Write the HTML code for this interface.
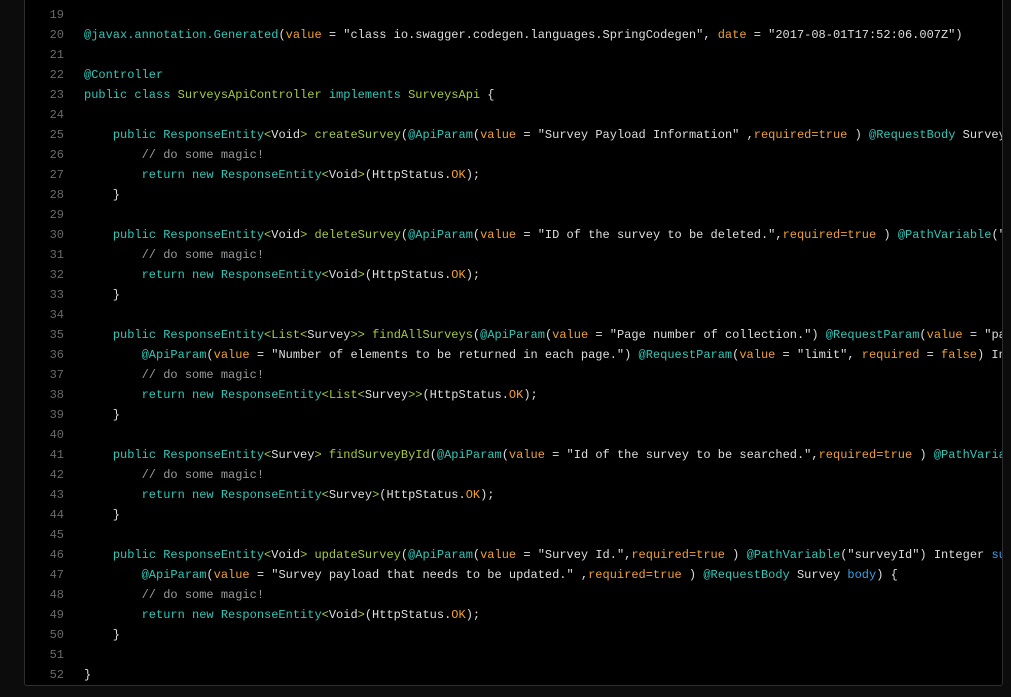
<!DOCTYPE html>
<html><head><meta charset="utf-8"><style>
html,body{margin:0;padding:0;background:#0c0c0c;width:1011px;height:697px;overflow:hidden}
.box{position:absolute;left:24px;top:-2px;width:977px;height:686px;background:#000;border:1px solid #2e2e2e;border-radius:3px;overflow:hidden}
.l{position:absolute;left:0;height:20px;line-height:20px;white-space:pre;font-family:"Liberation Mono",monospace;font-size:12px;color:#dedede}
.n{display:inline-block;width:39px;text-align:right;color:#6a6a6a;margin-right:20px}
.k{color:#2fc7b8}.g{color:#a7c93c}.o{color:#f0a030}.c{color:#9a9a9a}.b{color:#35a2e8}
</style></head><body><div class="box">
<div class="l" style="top:6px"><span class="n">19</span></div>
<div class="l" style="top:26px"><span class="n">20</span><span class="k">@javax.annotation.Generated</span>(<span class="o">value</span> = "class io.swagger.codegen.languages.SpringCodegen", <span class="o">date</span> = "2017-08-01T17:52:06.007Z")</div>
<div class="l" style="top:46px"><span class="n">21</span></div>
<div class="l" style="top:66px"><span class="n">22</span><span class="k">@Controller</span></div>
<div class="l" style="top:86px"><span class="n">23</span><span class="k">public class</span> <span class="g">SurveysApiController</span> <span class="k">implements</span> <span class="g">SurveysApi</span> {</div>
<div class="l" style="top:106px"><span class="n">24</span></div>
<div class="l" style="top:126px"><span class="n">25</span>    <span class="k">public ResponseEntity</span><span class="g">&lt;</span>Void<span class="g">&gt;</span> <span class="g">createSurvey</span>(<span class="k">@ApiParam</span>(<span class="o">value</span> = "Survey Payload Information" ,<span class="o">required=true</span> ) <span class="k">@RequestBody</span> Survey body) {</div>
<div class="l" style="top:146px"><span class="n">26</span>        <span class="c">// do some magic!</span></div>
<div class="l" style="top:166px"><span class="n">27</span>        <span class="k">return new ResponseEntity</span><span class="g">&lt;</span>Void<span class="g">&gt;</span>(HttpStatus.<span class="o">OK</span>);</div>
<div class="l" style="top:186px"><span class="n">28</span>    }</div>
<div class="l" style="top:206px"><span class="n">29</span></div>
<div class="l" style="top:226px"><span class="n">30</span>    <span class="k">public ResponseEntity</span><span class="g">&lt;</span>Void<span class="g">&gt;</span> <span class="g">deleteSurvey</span>(<span class="k">@ApiParam</span>(<span class="o">value</span> = "ID of the survey to be deleted.",<span class="o">required=true</span> ) <span class="k">@PathVariable</span>("surveyId") Integer</div>
<div class="l" style="top:246px"><span class="n">31</span>        <span class="c">// do some magic!</span></div>
<div class="l" style="top:266px"><span class="n">32</span>        <span class="k">return new ResponseEntity</span><span class="g">&lt;</span>Void<span class="g">&gt;</span>(HttpStatus.<span class="o">OK</span>);</div>
<div class="l" style="top:286px"><span class="n">33</span>    }</div>
<div class="l" style="top:306px"><span class="n">34</span></div>
<div class="l" style="top:326px"><span class="n">35</span>    <span class="k">public ResponseEntity</span><span class="g">&lt;List&lt;</span>Survey<span class="g">&gt;&gt;</span> <span class="g">findAllSurveys</span>(<span class="k">@ApiParam</span>(<span class="o">value</span> = "Page number of collection.") <span class="k">@RequestParam</span>(<span class="o">value</span> = "page"</div>
<div class="l" style="top:346px"><span class="n">36</span>        <span class="k">@ApiParam</span>(<span class="o">value</span> = "Number of elements to be returned in each page.") <span class="k">@RequestParam</span>(<span class="o">value</span> = "limit", <span class="o">required</span> = <span class="o">false</span>) Integer</div>
<div class="l" style="top:366px"><span class="n">37</span>        <span class="c">// do some magic!</span></div>
<div class="l" style="top:386px"><span class="n">38</span>        <span class="k">return new ResponseEntity</span><span class="g">&lt;List&lt;</span>Survey<span class="g">&gt;&gt;</span>(HttpStatus.<span class="o">OK</span>);</div>
<div class="l" style="top:406px"><span class="n">39</span>    }</div>
<div class="l" style="top:426px"><span class="n">40</span></div>
<div class="l" style="top:446px"><span class="n">41</span>    <span class="k">public ResponseEntity</span><span class="g">&lt;</span>Survey<span class="g">&gt;</span> <span class="g">findSurveyById</span>(<span class="k">@ApiParam</span>(<span class="o">value</span> = "Id of the survey to be searched.",<span class="o">required=true</span> ) <span class="k">@PathVariable</span>("surveyId")</div>
<div class="l" style="top:466px"><span class="n">42</span>        <span class="c">// do some magic!</span></div>
<div class="l" style="top:486px"><span class="n">43</span>        <span class="k">return new ResponseEntity</span><span class="g">&lt;</span>Survey<span class="g">&gt;</span>(HttpStatus.<span class="o">OK</span>);</div>
<div class="l" style="top:506px"><span class="n">44</span>    }</div>
<div class="l" style="top:526px"><span class="n">45</span></div>
<div class="l" style="top:546px"><span class="n">46</span>    <span class="k">public ResponseEntity</span><span class="g">&lt;</span>Void<span class="g">&gt;</span> <span class="g">updateSurvey</span>(<span class="k">@ApiParam</span>(<span class="o">value</span> = "Survey Id.",<span class="o">required=true</span> ) <span class="k">@PathVariable</span>("surveyId") Integer <span class="b">surveyId</span>,</div>
<div class="l" style="top:566px"><span class="n">47</span>        <span class="k">@ApiParam</span>(<span class="o">value</span> = "Survey payload that needs to be updated." ,<span class="o">required=true</span> ) <span class="k">@RequestBody</span> Survey <span class="b">body</span>) {</div>
<div class="l" style="top:586px"><span class="n">48</span>        <span class="c">// do some magic!</span></div>
<div class="l" style="top:606px"><span class="n">49</span>        <span class="k">return new ResponseEntity</span><span class="g">&lt;</span>Void<span class="g">&gt;</span>(HttpStatus.<span class="o">OK</span>);</div>
<div class="l" style="top:626px"><span class="n">50</span>    }</div>
<div class="l" style="top:646px"><span class="n">51</span></div>
<div class="l" style="top:666px"><span class="n">52</span>}</div>
</div></body></html>
